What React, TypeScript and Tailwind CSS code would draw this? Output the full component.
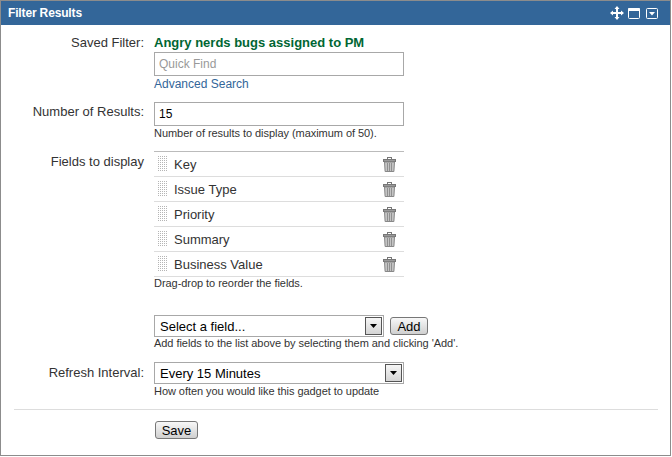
import React from 'react';

const Row = ({ label, children, className = '', labelClass = '' }: { label?: string; children: React.ReactNode; className?: string; labelClass?: string }) => (
  <div className={`flex ${className}`}>
    <div className={`w-[143px] shrink-0 text-right text-[13px] leading-[16px] text-[#333] ${labelClass}`}>{label}</div>
    <div className="ml-[10px] min-w-0 flex-1">{children}</div>
  </div>
);

const Help = ({ children }: { children: React.ReactNode }) => (
  <div className="text-[11px] leading-[13px] tracking-[-0.05px] text-[#333]">{children}</div>
);

const Trash = () => (
  <svg width="13" height="15" viewBox="0 0 13 15" className="shrink-0">
    <rect x="4.5" y="0.5" width="4" height="2" fill="none" stroke="#777" />
    <rect x="0.5" y="2.5" width="12" height="2" fill="#999" stroke="#777" />
    <path d="M1.5 5h10l-.6 9.5H2.1z" fill="#c4c4c4" stroke="#888" />
    <path d="M4.5 6v8M6.5 6v8M8.5 6v8" stroke="#909090" />
  </svg>
);

const Grip = () => (
  <svg width="9" height="16" viewBox="0 0 9 16" className="shrink-0">
    {[0, 2, 4, 6, 8, 10, 12, 14].map((y) =>
      [0, 2, 4, 6, 8].map((x) => <rect key={`${x}-${y}`} x={x} y={y} width="1" height="1" fill="#b5b5b5" />)
    )}
  </svg>
);

const SelectBox = ({ text, width }: { text: string; width: string }) => (
  <div className={`flex h-[22px] items-center justify-between border border-[#a8a8a8] bg-white pl-[5px] pr-[1px] text-[13px] text-black ${width}`}>
    <span className="pt-[1px]">{text}</span>
    <span className="flex h-[18px] w-[17px] items-center justify-center border border-[#555] bg-gradient-to-b from-[#f6f6f6] to-[#d4d4d4]">
      <svg width="7" height="4" viewBox="0 0 7 4">
        <path d="M0 0h7L3.5 4z" fill="#000" />
      </svg>
    </span>
  </div>
);

const fields = ['Key', 'Issue Type', 'Priority', 'Summary', 'Business Value'];

const App = () => {
  return (
    <div className="h-[457px] w-[672px] bg-white font-['Liberation_Sans',Arial,sans-serif]">
      <div className="h-[456px] w-[671px] border border-[#8c8c8c]">
        <div className="flex h-[24px] items-center justify-between bg-[#336699] pl-[7px] pr-[12px]">
          <span className="text-[12px] font-bold tracking-[-0.15px] text-white">Filter Results</span>
          <div className="flex items-center">
            <svg width="14" height="14" viewBox="0 0 14 14">
              <path d="M7 1v12M1 7h12" stroke="#fff" strokeWidth="2" />
              <path d="M7 0l2.5 3h-5zM7 14l2.5-3h-5zM0 7l3-2.5v5zM14 7l-3-2.5v5z" fill="#fff" />
            </svg>
            <svg width="12" height="11" viewBox="0 0 12 11" className="ml-[4px]">
              <rect x="0.5" y="0.5" width="11" height="10" rx="1" fill="#336699" stroke="#fff" />
              <rect x="0" y="0" width="12" height="3" rx="1" fill="#fff" />
            </svg>
            <svg width="12" height="11" viewBox="0 0 12 11" className="ml-[6px]">
              <rect x="0.5" y="0.5" width="11" height="10" rx="1" fill="#336699" stroke="#fff" />
              <path d="M3 4h6L6 7.5z" fill="#fff" />
            </svg>
          </div>
        </div>

        <div className="pt-[10px]">
          <Row label="Saved Filter:">
            <div className="text-[13px] font-bold leading-[16px] text-[#006633]">Angry nerds bugs assigned to PM</div>
            <input
              readOnly
              placeholder="Quick Find"
              className="mt-[1px] block h-[24px] w-[250px] border border-[#a8a8a8] px-[4px] text-[12px] outline-none placeholder:text-[#999]"
            />
            <div className="mt-[1px] text-[12px] leading-[15px] text-[#336699]">Advanced Search</div>
          </Row>

          <Row label="Number of Results:" className="mt-[10px]" labelClass="pt-[2px]">
            <input
              readOnly
              value="15"
              className="block h-[24px] w-[250px] border border-[#a8a8a8] px-[4px] text-[12px] text-black outline-none"
            />
            <div className="mt-[1px]">
              <Help>Number of results to display (maximum of 50).</Help>
            </div>
          </Row>

          <Row label="Fields to display" className="mt-[11px]" labelClass="pt-[3px]">
            <div className="w-[250px] border-t border-[#bbb]">
              {fields.map((f) => (
                <div key={f} className="flex h-[25px] items-center border-b border-[#ddd] pl-[4px] pr-[8px]">
                  <Grip />
                  <span className="ml-[7px] flex-1 pt-[1px] text-[13px] text-[#333]">{f}</span>
                  <Trash />
                </div>
              ))}
            </div>
            <Help>Drag-drop to reorder the fields.</Help>
          </Row>

          <Row className="mt-[25px]">
            <div className="flex items-center">
              <SelectBox text="Select a field..." width="w-[230px]" />
              <button className="ml-[6px] h-[18px] w-[38px] rounded-[3px] border border-[#777] bg-gradient-to-b from-[#f8f8f8] to-[#d0d0d0] text-[13px] leading-none text-black">
                Add
              </button>
            </div>
            <Help>Add fields to the list above by selecting them and clicking 'Add'.</Help>
          </Row>

          <Row label="Refresh Interval:" className="mt-[12px]" labelClass="pt-[3px]">
            <SelectBox text="Every 15 Minutes" width="w-[250px]" />
            <div className="mt-[1px]">
              <Help>How often you would like this gadget to update</Help>
            </div>
          </Row>

          <div className="ml-[13px] mr-[12px] mt-[11px] border-t border-[#ddd]" />

          <div className="ml-[154px] mt-[11px] flex">
            <button className="h-[18px] w-[43px] rounded-[3px] border border-[#777] bg-gradient-to-b from-[#f8f8f8] to-[#d0d0d0] text-[13px] leading-none text-black">
              Save
            </button>
          </div>
        </div>
      </div>
    </div>
  );
};

export default App;
